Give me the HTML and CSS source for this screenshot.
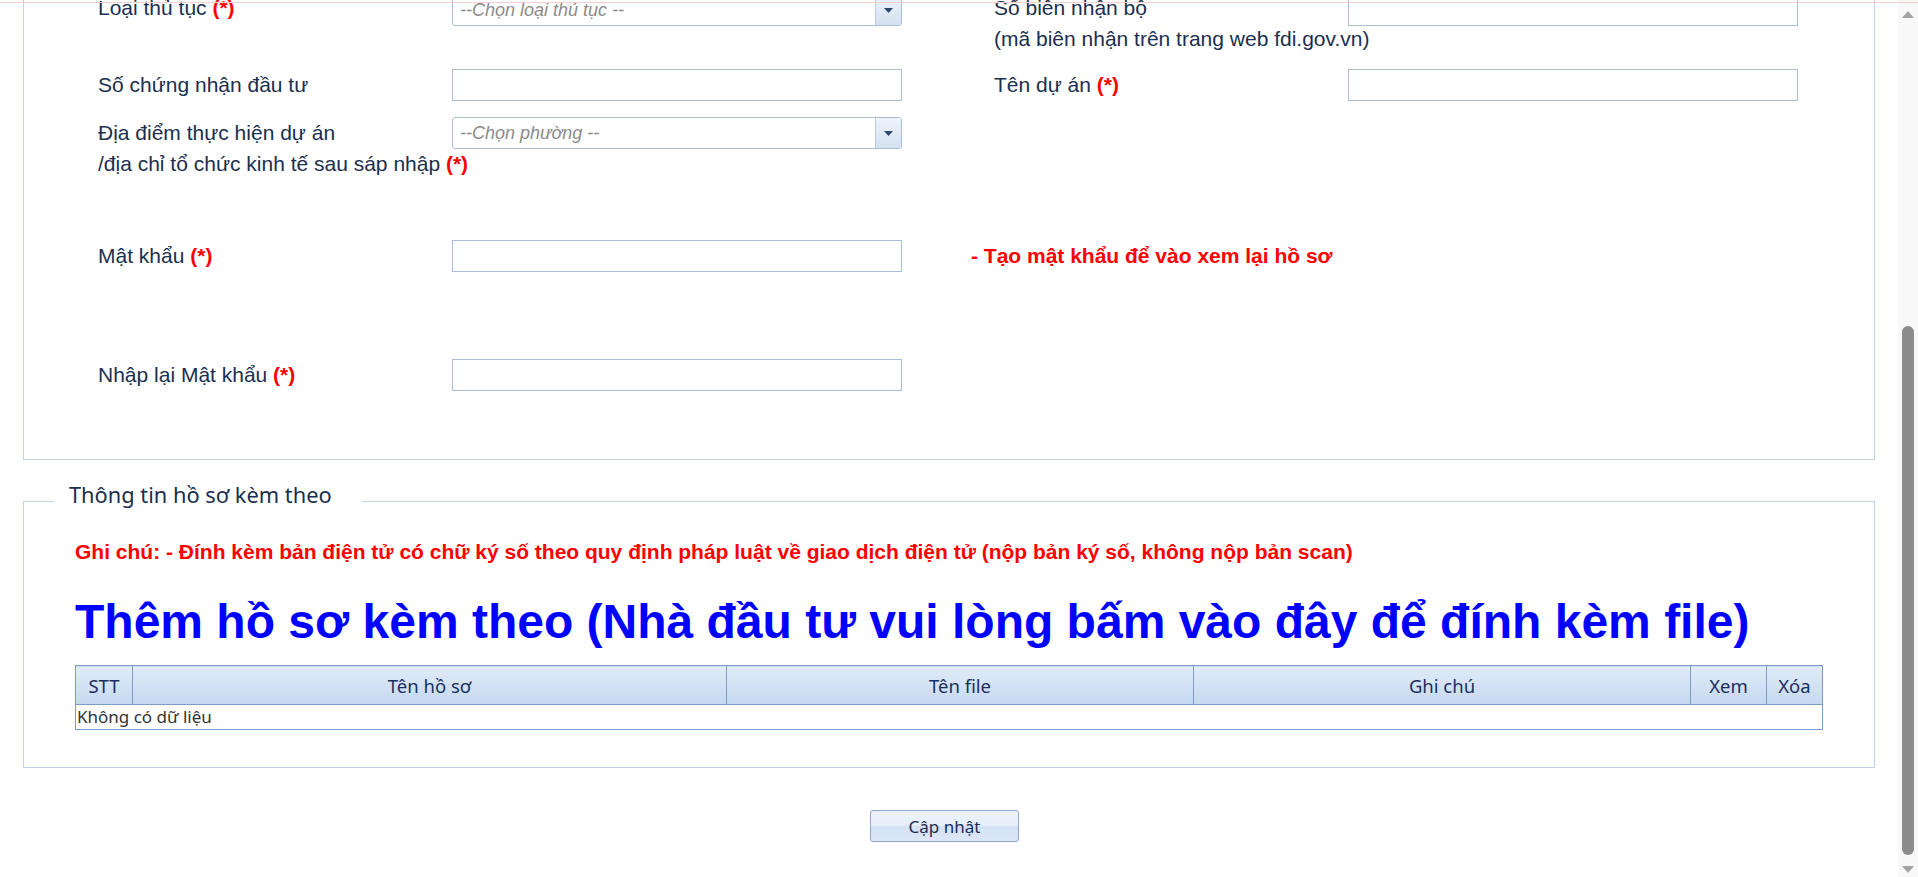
FILE: index.html
```html
<!DOCTYPE html>
<html lang="vi">
<head>
    <meta charset="UTF-8">
    <meta name="viewport" content="width=device-width, initial-scale=1.0">
    <title>Nộp hồ sơ</title>
    <link rel="stylesheet" href="styles.css">
</head>
<body>
    <div class="topline"></div>
    <div class="window">
        <main class="page">
            <fieldset class="box box-main">
                <div class="form-grid">
                    <div class="lbl lbl-first">Loại thủ tục <span class="req">(*)</span></div>
                    <div class="combo">
                        <span class="combo-text">--Chọn loại thủ tục --</span>
                        <span class="combo-btn"><svg width="9" height="5" viewBox="0 0 9 5"><polygon points="0,0 9,0 4.5,5" fill="#2f4468"/></svg></span>
                    </div>
                    <div class="lbl lbl-first">Số biên nhận bộ<br>(mã biên nhận trên trang web fdi.gov.vn)</div>
                    <input class="field" type="text">

                    <div class="lbl">Số chứng nhận đầu tư</div>
                    <input class="field" type="text">
                    <div class="lbl">Tên dự án <span class="req">(*)</span></div>
                    <input class="field" type="text">

                    <div class="lbl">Địa điểm thực hiện dự án<br>/địa chỉ tổ chức kinh tế sau sáp nhập <span class="req">(*)</span></div>
                    <div class="combo">
                        <span class="combo-text">--Chọn phường --</span>
                        <span class="combo-btn"><svg width="9" height="5" viewBox="0 0 9 5"><polygon points="0,0 9,0 4.5,5" fill="#2f4468"/></svg></span>
                    </div>
                    <div></div>
                    <div></div>

                    <div class="lbl">Mật khẩu <span class="req">(*)</span></div>
                    <input class="field" type="password">
                    <div class="hint">- Tạo mật khẩu để vào xem lại hồ sơ</div>

                    <div class="lbl">Nhập lại Mật khẩu <span class="req">(*)</span></div>
                    <input class="field" type="password">
                </div>
            </fieldset>

            <fieldset class="box box-files">
                <legend>Thông tin hồ sơ kèm theo</legend>
                <div class="files-body">
                    <p class="note">Ghi chú: - Đính kèm bản điện tử có chữ ký số theo quy định pháp luật về giao dịch điện tử (nộp bản ký số, không nộp bản scan)</p>
                    <a class="add-link" href="#">Thêm hồ sơ kèm theo (Nhà đầu tư vui lòng bấm vào đây để đính kèm file)</a>
                    <table class="grid">
                        <colgroup>
                            <col class="c-stt">
                            <col class="c-name">
                            <col class="c-file">
                            <col class="c-note">
                            <col class="c-view">
                            <col class="c-del">
                        </colgroup>
                        <thead>
                            <tr>
                                <th>STT</th>
                                <th>Tên hồ sơ</th>
                                <th>Tên file</th>
                                <th>Ghi chú</th>
                                <th>Xem</th>
                                <th>Xóa</th>
                            </tr>
                        </thead>
                        <tbody>
                            <tr>
                                <td class="empty" colspan="6">Không có dữ liệu</td>
                            </tr>
                        </tbody>
                    </table>
                </div>
            </fieldset>

            <div class="actions">
                <button class="btn" type="button">Cập nhật</button>
            </div>
        </main>

        <div class="scrollbar">
            <svg class="sb-arrow" width="12" height="7" viewBox="0 0 12 7"><polygon points="6,0 12,7 0,7" fill="#a3a3a3"/></svg>
            <div class="sb-thumb"></div>
            <svg class="sb-arrow sb-down" width="12" height="7" viewBox="0 0 12 7"><polygon points="0,0 12,0 6,7" fill="#a3a3a3"/></svg>
        </div>
    </div>
</body>
</html>
```

FILE: styles.css
```css
body {
    margin: 0;
    font-family: "Liberation Sans", Arial, sans-serif;
    color: #1b2f50;
    background: #fff;
    overflow: hidden;
}

.topline {
    position: fixed;
    top: 2px;
    left: 0;
    right: 0;
    height: 1px;
    background: #f3cfcf;
}

.window {
    display: flex;
    height: 877px;
    overflow: hidden;
}

.page {
    flex: 1;
    min-width: 0;
    padding: 0 23px;
}

/* fieldsets */
.box {
    margin: 0;
    padding: 0;
    min-width: 0;
    border: 1px solid #c2d3e6;
}

.box-main {
    margin-top: -40px;
    padding: 33px 0 68px 74px;
}

.form-grid {
    display: grid;
    grid-template-columns: 354px 542px 354px 450px;
    grid-template-rows: 75px 48px 123px 119px 32px;
    align-items: start;
}

.lbl {
    font-size: 21px;
    line-height: 31px;
    white-space: nowrap;
}

.lbl-first {
    margin-top: -2px;
}

.req {
    color: #f00;
    font-weight: bold;
}

.field {
    width: 450px;
    height: 32px;
    box-sizing: border-box;
    margin: 0;
    border: 1px solid #a9bfd9;
    font: inherit;
}

.combo {
    width: 450px;
    height: 32px;
    box-sizing: border-box;
    display: flex;
    border: 1px solid #a9bfd9;
    border-radius: 3px;
    background: #fff;
}

.combo-text {
    flex: 1;
    padding-left: 7px;
    font-size: 18px;
    line-height: 30px;
    font-style: italic;
    color: #8c8c8c;
}

.combo-btn {
    width: 25px;
    display: flex;
    align-items: center;
    justify-content: center;
    border-left: 1px solid #b9cce3;
    border-radius: 0 2px 2px 0;
    background: linear-gradient(#eef3fa, #d4e1f1);
}

.hint {
    grid-column: 3 / 5;
    margin-left: -23px;
    font-size: 21px;
    line-height: 31px;
    font-weight: bold;
    color: #f00;
}

.box-files {
    margin-top: 20px;
}

.box-files legend {
    margin-left: 30px;
    padding: 0 30px 13px 15px;
    font-family: "Noto Sans", sans-serif;
    font-size: 21.8px;
    line-height: 30px;
    color: #1b2f50;
}

.files-body {
    padding: 17px 52px 37px 51px;
}

.note {
    margin: 0;
    font-size: 21px;
    line-height: 24px;
    font-weight: bold;
    color: #f00;
    white-space: nowrap;
}

.add-link {
    display: block;
    margin-top: 30px;
    font-size: 48px;
    line-height: 56px;
    font-weight: bold;
    color: #00f;
    text-decoration: none;
    white-space: nowrap;
}

/* attachments table */
.grid {
    width: 100%;
    margin-top: 15px;
    border-collapse: collapse;
    table-layout: fixed;
    font-family: "Noto Sans", sans-serif;
    font-size: 17px;
}

.c-stt { width: 57px; }
.c-name { width: 594px; }
.c-file { width: 467px; }
.c-note { width: 497px; }
.c-view { width: 76px; }
.c-del { width: 56px; }

.grid th {
    height: 38px;
    padding: 0;
    border: 1px solid #7a9cc6;
    background: linear-gradient(#e1ebf7, #c5d9f0);
    font-size: 18.5px;
    font-weight: normal;
    color: #1b2f5e;
}

.grid td.empty {
    height: 24px;
    padding: 0 1px;
    border: 1px solid #7a9cc6;
    line-height: 22px;
    color: #333;
}

.actions {
    margin-top: 42px;
    padding-right: 9px;
    text-align: center;
}

.btn {
    width: 149px;
    height: 32px;
    border: 1px solid #8ea7cb;
    border-radius: 3px;
    background: linear-gradient(#ebf2fb 0%, #e5eefa 48%, #d3e2f4 52%, #dce7f6 100%);
    font-family: "Noto Sans", sans-serif;
    font-size: 17px;
    color: #1b2b55;
    cursor: pointer;
}

/* page scrollbar */
.scrollbar {
    width: 20px;
    padding-top: 11px;
    box-sizing: border-box;
    display: flex;
    flex-direction: column;
    align-items: center;
    background: #f8f8f8;
}

.sb-thumb {
    width: 12px;
    height: 529px;
    margin-top: 308px;
    border-radius: 6px;
    background: #8c8c8c;
}

.sb-down {
    margin-top: 11px;
}
```
